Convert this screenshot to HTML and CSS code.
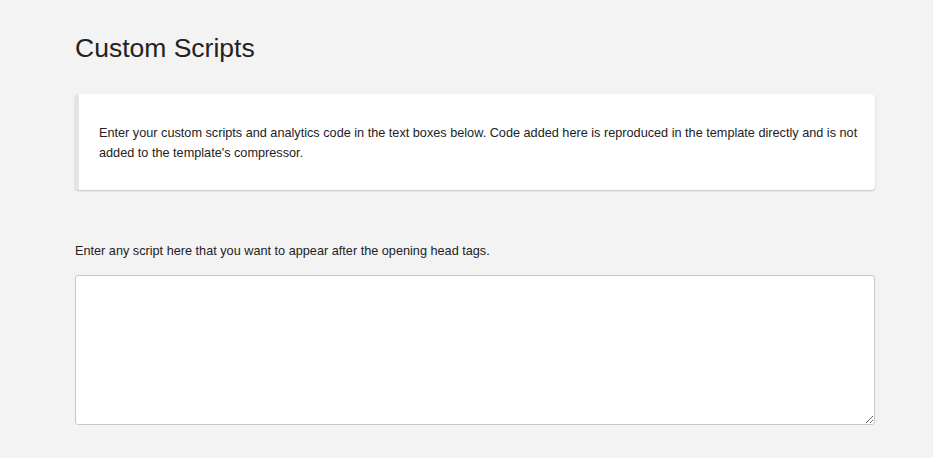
FILE: index.html
```html
<!DOCTYPE html>
<html lang="en">
<head>
  <meta charset="UTF-8">
  <title>Custom Scripts</title>
  <link rel="stylesheet" href="styles.css">
</head>
<body>
  <div class="page">
    <h1>Custom Scripts</h1>

    <!-- Aviso -->
    <div class="notice">
      <p>Enter your custom scripts and analytics code in the text boxes below. Code added here is reproduced in the template directly and is not added to the template's compressor.</p>
    </div>

    <!-- Campo head -->
    <div class="field">
      <label for="headScripts">Enter any script here that you want to appear after the opening head tags.</label>
      <textarea id="headScripts"></textarea>
    </div>
  </div>
</body>
</html>
```

FILE: styles.css
```css
/* General */
body {
  font-family: "Liberation Sans", Arial, sans-serif;
  margin: 0;
  padding: 0;
  background-color: #f3f3f3;
  color: #222222;
}

.page {
  width: 800px;
  padding: 0 0 0 75px;
}

h1 {
  font-size: 26.5px;
  font-weight: normal;
  color: #222222;
  margin: 0;
  padding-top: 33px;
  line-height: 30px;
}

/* Aviso */
.notice {
  margin-top: 31px;
  background-color: #ffffff;
  border-left: 4px solid #e4e4e4;
  border-radius: 4px;
  box-shadow: 0 1px 2px rgba(0, 0, 0, 0.2);
  padding: 29px 12px 27px 20px;
}

.notice p {
  margin: 0;
  font-size: 12.7px;
  line-height: 20px;
}

/* Campo */
.field {
  margin-top: 53px;
}

.field label {
  display: block;
  font-size: 12.7px;
  line-height: 16px;
  margin-bottom: 16px;
}

.field textarea {
  display: block;
  box-sizing: border-box;
  width: 800px;
  height: 150px;
  border: 1px solid #c8c8c8;
  border-radius: 3px;
  background-color: #ffffff;
  margin: 0;
}
```
